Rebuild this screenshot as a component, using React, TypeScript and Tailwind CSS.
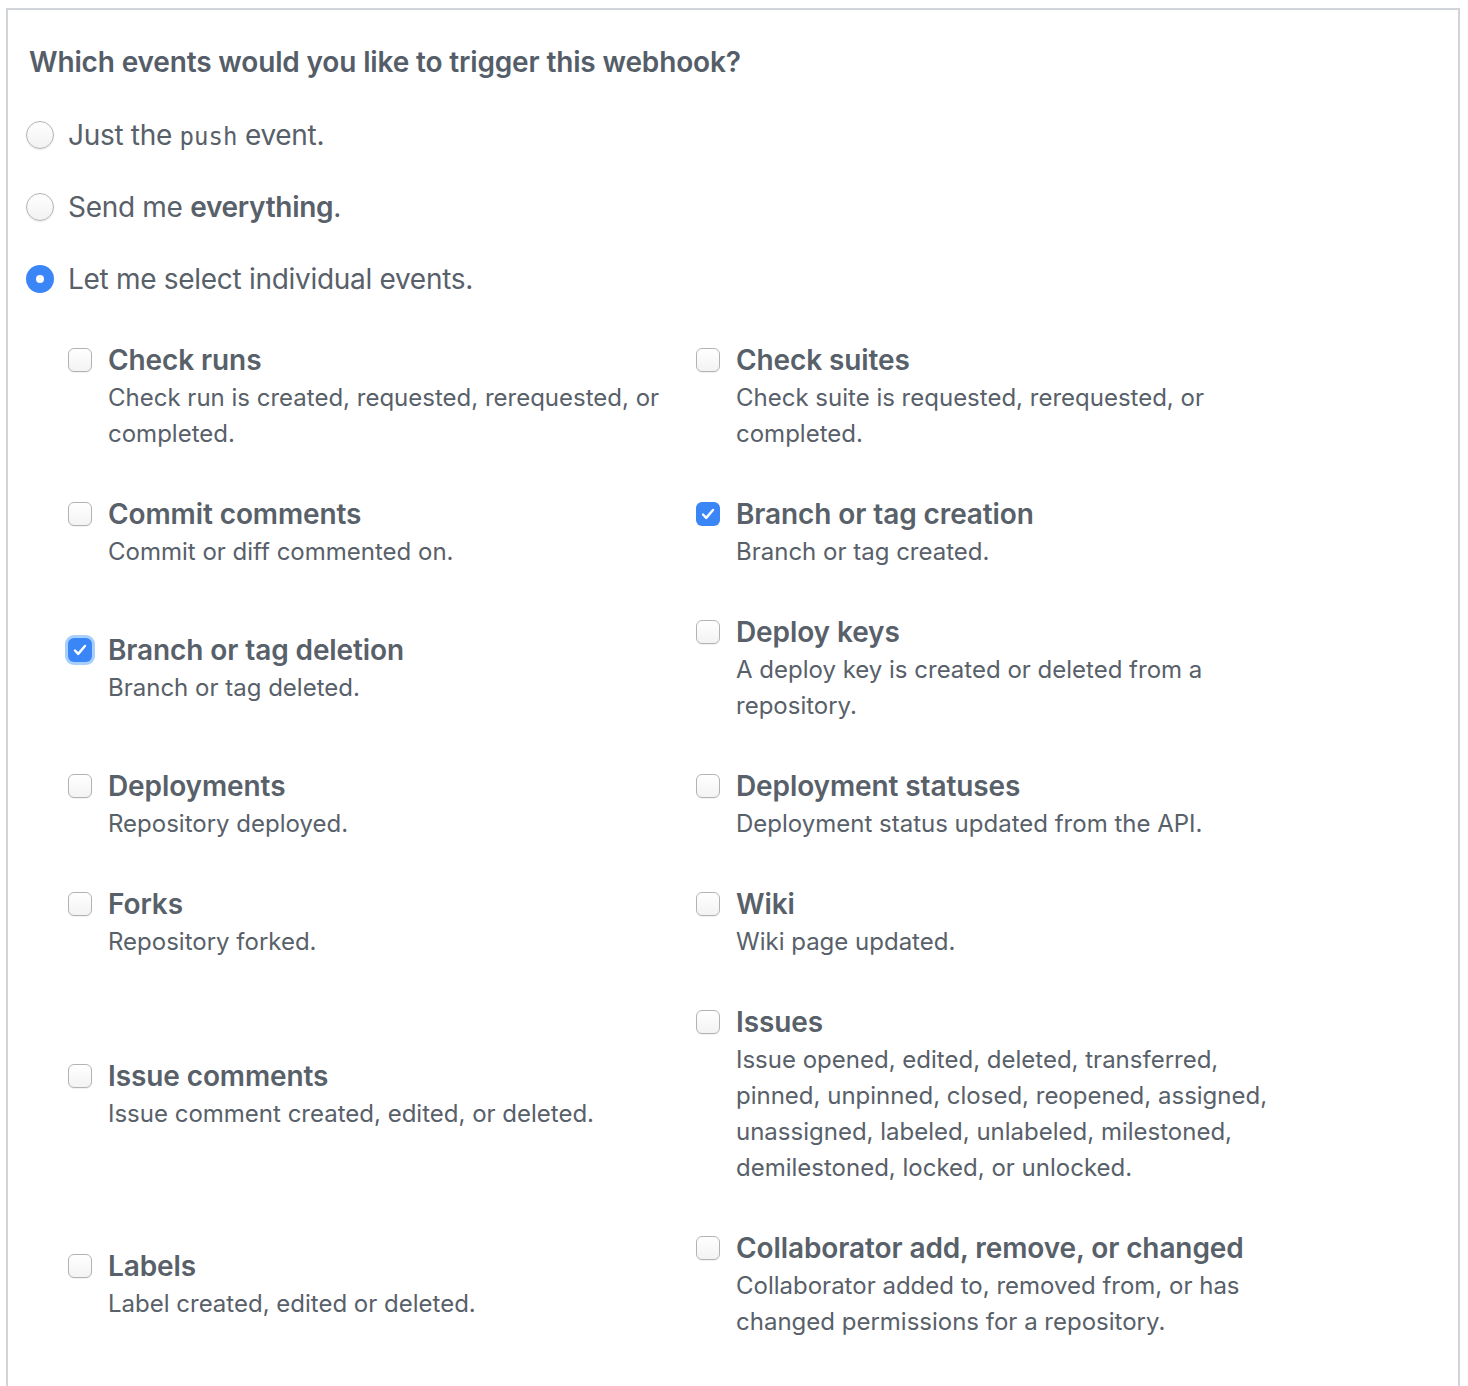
import React from "react";

type EventItem = {
  title: string;
  desc: string;
  checked?: boolean;
  focused?: boolean;
};

const rows: [EventItem, EventItem][] = [
  [
    { title: "Check runs", desc: "Check run is created, requested, rerequested, or completed." },
    { title: "Check suites", desc: "Check suite is requested, rerequested, or completed." },
  ],
  [
    { title: "Commit comments", desc: "Commit or diff commented on." },
    { title: "Branch or tag creation", desc: "Branch or tag created.", checked: true },
  ],
  [
    { title: "Branch or tag deletion", desc: "Branch or tag deleted.", checked: true, focused: true },
    { title: "Deploy keys", desc: "A deploy key is created or deleted from a repository." },
  ],
  [
    { title: "Deployments", desc: "Repository deployed." },
    { title: "Deployment statuses", desc: "Deployment status updated from the API." },
  ],
  [
    { title: "Forks", desc: "Repository forked." },
    { title: "Wiki", desc: "Wiki page updated." },
  ],
  [
    { title: "Issue comments", desc: "Issue comment created, edited, or deleted." },
    {
      title: "Issues",
      desc: "Issue opened, edited, deleted, transferred, pinned, unpinned, closed, reopened, assigned, unassigned, labeled, unlabeled, milestoned, demilestoned, locked, or unlocked.",
    },
  ],
  [
    { title: "Labels", desc: "Label created, edited or deleted." },
    {
      title: "Collaborator add, remove, or changed",
      desc: "Collaborator added to, removed from, or has changed permissions for a repository.",
    },
  ],
];

function Radio({ checked }: { checked?: boolean }) {
  if (checked) {
    return (
      <span className="flex h-[28px] w-[28px] shrink-0 items-center justify-center rounded-full bg-[#3b86f7]">
        <span className="h-[8px] w-[8px] rounded-full bg-white" />
      </span>
    );
  }
  return (
    <span className="h-[28px] w-[28px] shrink-0 rounded-full border border-[#b3b3b3] bg-gradient-to-b from-white to-[#f2f2f2] shadow-[0_1px_1px_rgba(0,0,0,0.08)]" />
  );
}

function Checkbox({ checked, focused }: { checked?: boolean; focused?: boolean }) {
  if (checked) {
    return (
      <span
        className={
          focused
            ? "mt-[8px] flex h-[24px] w-[24px] shrink-0 items-center justify-center rounded-[6px] bg-[#3b86f7] shadow-[0_0_0_3px_rgba(96,165,250,0.55)]"
            : "mt-[8px] flex h-[24px] w-[24px] shrink-0 items-center justify-center rounded-[6px] bg-[#3b86f7]"
        }
      >
        <svg width="18" height="18" viewBox="0 0 18 18" fill="none">
          <path d="M4 9.5l3.2 3.4L14 5" stroke="white" strokeWidth="2.4" strokeLinecap="round" strokeLinejoin="round" />
        </svg>
      </span>
    );
  }
  return (
    <span className="mt-[8px] h-[24px] w-[24px] shrink-0 rounded-[6px] border border-[#b3b3b3] bg-gradient-to-b from-white to-[#f3f3f3] shadow-[0_1px_1px_rgba(0,0,0,0.06)]" />
  );
}

function EventOption({ item }: { item: EventItem }) {
  return (
    <div className="flex items-start gap-[16px]">
      <Checkbox checked={item.checked} focused={item.focused} />
      <div className="w-[562px]">
        <div className="text-[28px] font-semibold leading-[40px] tracking-[-0.1px]">{item.title}</div>
        <div className="text-[24px] leading-[36px]">{item.desc}</div>
      </div>
    </div>
  );
}

export default function App() {
  return (
    <div
      className="min-h-[1386px] bg-white text-[#586069]"
      style={{ fontFamily: "Inter, 'Noto Sans', sans-serif" }}
    >
      <div className="ml-[6px] min-h-[1386px] w-[1454px] border-x-2 border-[#d1d5da]">
        <div className="mt-[8px] border-t-2 border-[#d1d5da] pl-[18px] pt-[32px]">
          <h2 className="ml-[3px] text-[28px] font-semibold leading-[40px] tracking-[-0.15px] text-[#555e68]">
            Which events would you like to trigger this webhook?
          </h2>

          <div className="mt-[33px] flex flex-col gap-[32px]">
            <label className="flex h-[40px] items-center gap-[14px] text-[28px] tracking-[-0.3px]">
              <Radio />
              <span>
                Just the{" "}
                <code className="text-[24px] tracking-normal" style={{ fontFamily: "'DejaVu Sans Mono', monospace" }}>
                  push
                </code>{" "}
                event.
              </span>
            </label>
            <label className="flex h-[40px] items-center gap-[14px] text-[28px] tracking-[-0.3px]">
              <Radio />
              <span>
                Send me <strong className="font-semibold">everything</strong>.
              </span>
            </label>
            <label className="flex h-[40px] items-center gap-[14px] text-[28px] tracking-[-0.3px]">
              <Radio checked />
              <span>Let me select individual events.</span>
            </label>
          </div>

          <div className="ml-[42px] mt-[41px] grid grid-cols-[628px_628px] items-center gap-y-[42px] pb-[40px]">
            {rows.map(([left, right]) => (
              <React.Fragment key={left.title}>
                <EventOption item={left} />
                <EventOption item={right} />
              </React.Fragment>
            ))}
          </div>
        </div>
      </div>
    </div>
  );
}
